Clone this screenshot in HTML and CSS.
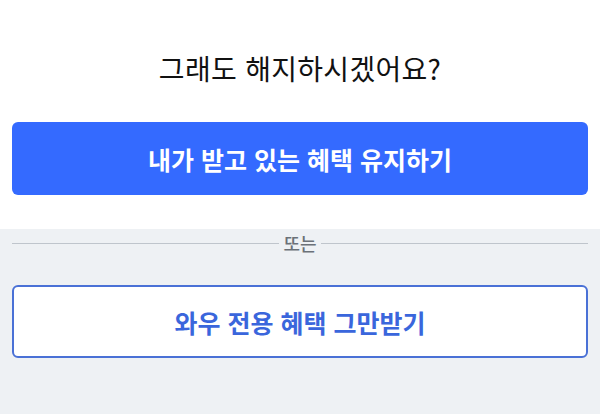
FILE: index.html
```html
<!DOCTYPE html>
<html lang="ko">
<head>
  <meta charset="UTF-8">
  <title>해지 확인</title>
  <link rel="stylesheet" href="styles.css">
</head>
<body>
  <div class="top">
    <h1 class="title">그래도 해지하시겠어요?</h1>
    <button class="btn btn-keep">내가 받고 있는 혜택 유지하기</button>
  </div>
  <div class="bottom">
    <div class="divider">
      <span class="line"></span>
      <span class="or">또는</span>
      <span class="line"></span>
    </div>
    <button class="btn btn-quit">와우 전용 혜택 그만받기</button>
  </div>
</body>
</html>
```

FILE: styles.css
```css
html, body {
  margin: 0;
  height: 100%;
}
body {
  font-family: "Noto Sans CJK KR", "Noto Sans", sans-serif;
  background: #eef1f4;
  display: flex;
  flex-direction: column;
}
.top {
  background: #fff;
  padding: 50px 12px 34px;
}
.title {
  margin: 0 0 36px;
  font-size: 28px;
  line-height: 36px;
  font-weight: 400;
  letter-spacing: 0.3px;
  color: #111;
  text-align: center;
}
.btn {
  display: block;
  width: 100%;
  font-family: inherit;
  font-size: 25px;
  font-weight: 700;
  border-radius: 6px;
  cursor: pointer;
}
.btn-keep {
  height: 73px;
  border: none;
  background: #346aff;
  color: #fff;
}
.bottom {
  flex: 1;
  padding: 4px 12px 0;
}
.divider {
  display: flex;
  align-items: center;
  gap: 3px;
  height: 20px;
  margin-bottom: 32px;
}
.line {
  flex: 1;
  height: 1px;
  background: #bfc5cc;
}
.or {
  font-size: 18px;
  line-height: 20px;
  font-weight: 500;
  color: #6b7178;
  padding: 0 1px;
}
.btn-quit {
  height: 73px;
  border: 2px solid #4a71d6;
  background: #fff;
  color: #3a66dc;
}
```
